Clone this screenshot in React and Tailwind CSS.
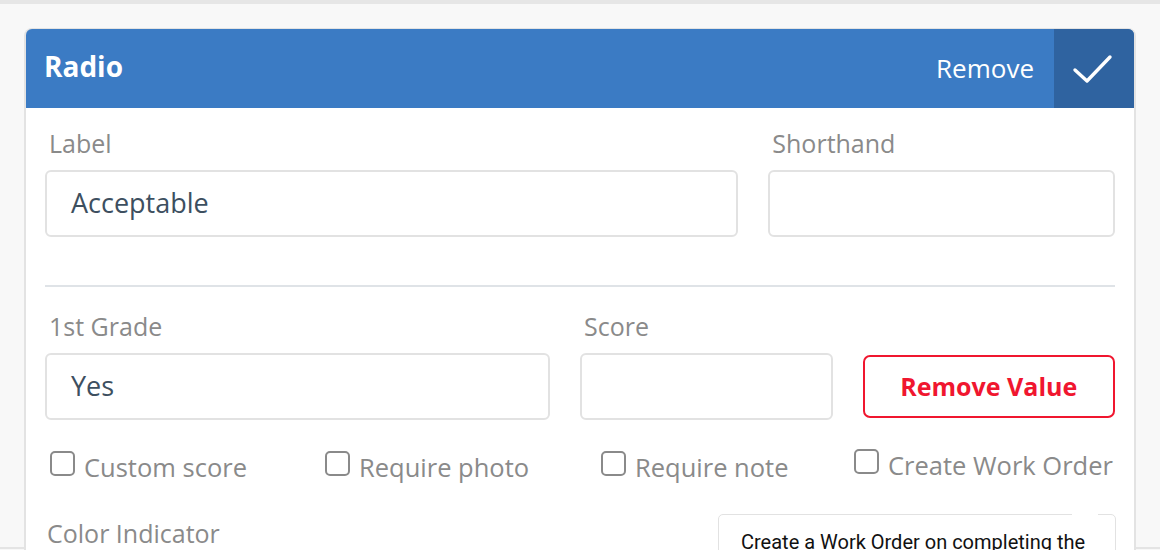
import React from "react";

function Field({ label, value, className = "" }) {
  return (
    <div className={"flex flex-col " + className}>
      <div className="text-[25px] leading-[30px] text-[#8a8a8a] pl-[4px] mb-[12px]">{label}</div>
      <div className="h-[67px] border-2 border-[#e2e2e2] rounded-[6px] flex items-center pl-[24px] text-[27px] text-[#3d4f5f]">
        {value}
      </div>
    </div>
  );
}

function Check({ label, className = "" }) {
  return (
    <div className={"flex items-start " + className}>
      <div className="w-[25px] h-[25px] border-2 border-[#8a8a8a] rounded-[5px] shrink-0" />
      <span className="ml-[9px] text-[25.5px] leading-[30px] text-[#8a8a8a] mt-[1px] whitespace-nowrap">{label}</span>
    </div>
  );
}

export default function App() {
  return (
    <div
      className="relative w-[1160px] h-[550px] overflow-hidden bg-[#f8f8f8] border-t-4 border-[#e6e6e6]"
      style={{ fontFamily: '"Open Sans", "Noto Sans", sans-serif' }}
    >
      <div className="absolute left-0 right-0 bottom-[1px] h-[2px] bg-[#e4e4e4]" />
      <div className="pt-[24px] px-[24px]">
        <div className="relative w-[1112px] bg-white border-2 border-b-0 border-[#e3e3e3] rounded-t-[8px]">
          {/* Header */}
          <div className="h-[79px] -mt-[1px] bg-[#3b7bc4] rounded-t-[6px] flex items-stretch">
            <div className="flex-1 flex items-center pl-[18px] pb-[6px] text-white font-bold text-[28px]">Radio</div>
            <div className="flex items-center pr-[20px] text-white text-[26px]">Remove</div>
            <div className="w-[80px] bg-[#2f63a0] rounded-tr-[6px] flex items-center justify-center">
              <svg width="80" height="79" viewBox="0 0 80 79">
                <polyline points="21,41 33,52 56,28" fill="none" stroke="white" strokeWidth="3.4" strokeLinecap="round" strokeLinejoin="round" />
              </svg>
            </div>
          </div>

          {/* Content */}
          <div className="relative px-[19px] pt-[20px] h-[460px]">
            <div className="grid grid-cols-[2fr_1fr] gap-x-[30px]">
              <Field label="Label" value="Acceptable" />
              <Field label="Shorthand" value="" />
            </div>

            <div className="mt-[48px] h-[2px] bg-[#dfe3e7]" />

            <div className="mt-[24px] grid grid-cols-[2fr_1fr_1fr] gap-x-[30px] items-end">
              <Field label="1st Grade" value="Yes" />
              <Field label="Score" value="" />
              <div className="h-[63px] mb-[2px] border-2 border-[#f0162f] rounded-[7px] flex items-center justify-center text-[#f0162f] font-bold text-[25px]">
                Remove Value
              </div>
            </div>

            <div className="mt-[31px] flex pl-[5px]">
              <Check label="Custom score" className="w-[275px]" />
              <Check label="Require photo" className="w-[276px]" />
              <Check label="Require note" className="w-[253px]" />
              <Check label="Create Work Order" className="-mt-[2px]" />
            </div>

            <div className="mt-[36px] pl-[2px] text-[25px] leading-[30px] text-[#8a8a8a]">Color Indicator</div>

            <div className="absolute left-[692px] top-[406px] w-[398px] h-[80px] bg-white border border-[#e2e2e2] rounded-[5px] pl-[22px] pt-[15px]">
              <div className="absolute -top-[1px] right-[17px] w-[26px] h-[2px] bg-white" />
              <span className="text-[20px] leading-[24px] text-[#111]" style={{ fontFamily: 'Roboto, "Noto Sans", sans-serif' }}>
                Create a Work Order on completing the
              </span>
            </div>
          </div>
        </div>
      </div>
    </div>
  );
}
